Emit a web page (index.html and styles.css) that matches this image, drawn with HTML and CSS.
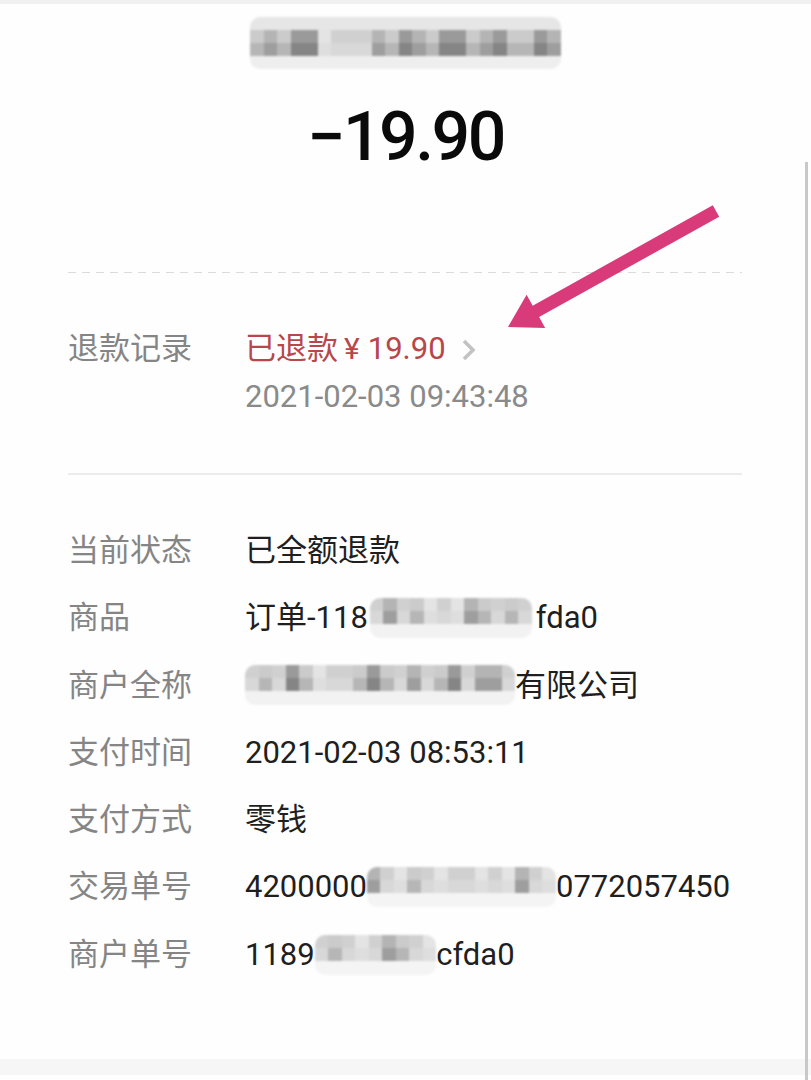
FILE: index.html
```html
<!DOCTYPE html>
<html lang="zh-CN">
<head>
<meta charset="utf-8">
<title>账单详情</title>
<link rel="stylesheet" href="styles.css">
</head>
<body>
<div class="page">
  <div class="topband"></div>

  <header class="head">
    <div class="mz title-mz">
      <i class="x3"></i><i class="x2"></i><i class="x3"></i><i class="x1"></i><i class="x1"></i><i class="x5"></i><i class="x4"></i><i class="x4"></i><i class="x4"></i><i class="x2"></i><i class="x3"></i><i class="x1"></i><i class="x2"></i><i class="x3"></i><i class="x1"></i><i class="x1"></i><i class="x3"></i><i class="x2"></i><i class="x1"></i><i class="x3"></i><i class="x3"></i><i class="x1"></i><i class="x2"></i>
    </div>
    <div class="amount">−19.90</div>
  </header>

  <div class="content">
    <div class="dashed"></div>

    <section class="refund">
      <div class="label">退款记录</div>
      <div class="refund-val">
        <div class="refund-line"><span class="red">已退款</span><span class="red yen">¥</span><span class="red">19.90</span>
          <svg class="chev" width="18" height="24" viewBox="0 0 18 24"><path d="M4 3 L13 12 L4 21" fill="none" stroke="#c2c2c2" stroke-width="3.6"/></svg>
        </div>
        <div class="refund-date">2021-02-03 09:43:48</div>
      </div>
    </section>

    <div class="solid"></div>

    <section class="rows">
      <div class="label">当前状态</div><div class="value">已全额退款</div>
      <div class="label">商品</div><div class="value">订单-118<span class="mz val-mz w12"><i class="x4"></i><i class="x2"></i><i class="x4"></i><i class="x3"></i><i class="x5"></i><i class="x4"></i><i class="x5"></i><i class="x2"></i><i class="x3"></i><i class="x4"></i><i class="x3"></i><i class="x4"></i></span>fda0</div>
      <div class="label">商户全称</div><div class="value"><span class="mz val-mz"><i class="x4"></i><i class="x3"></i><i class="x4"></i><i class="x1"></i><i class="x3"></i><i class="x5"></i><i class="x4"></i><i class="x4"></i><i class="x3"></i><i class="x1"></i><i class="x3"></i><i class="x4"></i><i class="x2"></i><i class="x4"></i><i class="x3"></i><i class="x1"></i><i class="x4"></i><i class="x2"></i><i class="x2"></i><i class="x4"></i></span>有限公司</div>
      <div class="label">支付时间</div><div class="value">2021-02-03 08:53:11</div>
      <div class="label">支付方式</div><div class="value">零钱</div>
      <div class="label">交易单号</div><div class="value">4200000<span class="mz val-mz light"><i class="x2"></i><i class="x4"></i><i class="x5"></i><i class="x3"></i><i class="x4"></i><i class="x5"></i><i class="x4"></i><i class="x4"></i><i class="x5"></i><i class="x4"></i><i class="x5"></i><i class="x2"></i><i class="x4"></i><i class="x5"></i></span>0772057450</div>
      <div class="label">商户单号</div><div class="value">1189<span class="mz val-mz light"><i class="x4"></i><i class="x3"></i><i class="x4"></i><i class="x5"></i><i class="x4"></i><i class="x2"></i><i class="x3"></i><i class="x4"></i><i class="x5"></i></span>cfda0</div>
    </section>
  </div>

  <div class="bottomband"></div>

  <svg class="arrow" width="811" height="400" viewBox="0 0 811 400">
    <polygon points="712.8,205.3 719.2,216.7 539.1,317.1 545.2,328 508,327 526.6,294.8 532.7,305.7" fill="#d93a7a"/>
  </svg>
</div>
</body>
</html>
```

FILE: styles.css
```css
* { box-sizing: border-box; }

html, body {
  margin: 0;
  padding: 0;
  background: #fefefe;
}

body {
  font-family: Roboto, "Noto Sans CJK SC", "Noto Sans", sans-serif;
  color: #1c1c1c;
}

.page {
  position: relative;
  width: 811px;
  height: 1080px;
  overflow: hidden;
}

.page::after {
  content: "";
  position: absolute;
  left: 805px;
  top: 162px;
  bottom: 0;
  width: 3px;
  background: #c8c8c8;
}

.topband {
  height: 4px;
  background: #f1f1f1;
}

.head {
  display: flex;
  flex-direction: column;
  align-items: center;
}

/* mosaic (blurred / pixelated redaction) */
.mz {
  display: inline-flex;
  --t: #ececec;
  --b: #f1f1f1;
  filter: blur(0.8px);
  border-radius: 10px;
  overflow: hidden;
}
.mz i {
  display: block;
  width: 13.5px;
  height: 100%;
  background: linear-gradient(to bottom,
    var(--t) 0 25%,
    var(--m1) 25% 50%,
    var(--m2) 50% 75%,
    var(--b) 75% 100%);
}
.x1 { --m1: #9a9a9a; --m2: #858585; }
.x2 { --m1: #b4b4b4; --m2: #9e9e9e; }
.x3 { --m1: #cbcbcb; --m2: #b6b6b6; }
.x4 { --m1: #d0d0d0; --m2: #d8d8d8; }
.x5 { --m1: #e4e4e4; --m2: #dedede; }

.title-mz {
  margin-top: 13px;
  height: 52px;
  --t: #e6e6e6;
  --b: #eeeeee;
}

.amount {
  margin-top: 34px;
  font-size: 68px;
  line-height: 68px;
  font-weight: 500;
  color: #0a0a0a;
  letter-spacing: -2.5px;
}

.content {
  margin-top: 101px;
  padding: 0 69px 0 68px;
}

.dashed {
  height: 1px;
  background: repeating-linear-gradient(to right, #dcdcdc 0 8px, transparent 8px 14px);
}

.solid {
  height: 2px;
  background: #ececec;
}

.label {
  color: #858585;
  font-size: 31px;
}

.refund {
  display: grid;
  grid-template-columns: 177px 1fr;
  padding: 52px 0;
  line-height: 48px;
}

.refund-line {
  display: flex;
  align-items: center;
  font-size: 31px;
}

.red { color: #b8474b; }
.yen {
  font-size: 30px;
  margin: 0 8px 0 6px;
}

.chev {
  margin-left: 14px;
  margin-top: 2px;
}

.refund-date {
  color: #8a8a8a;
  font-size: 31px;
}

.rows {
  display: grid;
  grid-template-columns: 177px 1fr;
  padding-top: 42px;
  padding-bottom: 71px;
  line-height: 67.3px;
}

.value {
  font-size: 31px;
  color: #1f1f1f;
  white-space: nowrap;
}

.val-mz {
  height: 40px;
  vertical-align: middle;
  --t: #efefef;
  --b: #f2f2f2;
  margin-top: -4px;
}
.val-mz i {
  background: linear-gradient(to bottom,
    var(--m1) 0 33%,
    var(--m2) 33% 66%,
    var(--b) 66% 100%);
}
.val-mz.light {
  --b: #f4f4f4;
}
.w12 { margin-left: 2px; margin-right: 4px; }

.bottomband {
  height: 16px;
  background: #f6f6f6;
}

.arrow {
  position: absolute;
  left: 0;
  top: 0;
  pointer-events: none;
}
```
